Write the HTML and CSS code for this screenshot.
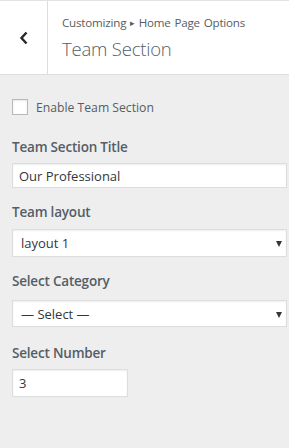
FILE: index.html
```html
<!DOCTYPE html>
<html>
<head>
  <meta charset="UTF-8">
  <title>Team Section</title>
  <link rel="stylesheet" href="styles.css">
</head>
<body>

  <div class="naglowek">
    <button class="wstecz" type="button" aria-label="Back">
      <svg width="10" height="14" viewBox="0 0 10 14">
        <polyline points="7.5,1.5 2.5,7 7.5,12.5" fill="none" stroke="#23282d" stroke-width="2.4"/>
      </svg>
    </button>
    <div class="tytul">
      <div class="okruszki">Customizing <span class="trojkat">&#9656;</span> Home Page Options</div>
      <div class="sekcja">Team Section</div>
    </div>
  </div>

  <div class="panel">
    <label class="wlacz">
      <input type="checkbox" class="pole-wyboru">
      <span>Enable Team Section</span>
    </label>

    <div class="kontrolka k-tytul">
      <label class="etykieta">Team Section Title</label>
      <input type="text" class="tekst" value="Our Professional">
    </div>

    <div class="kontrolka k-uklad">
      <label class="etykieta">Team layout</label>
      <div class="lista">
        <select>
          <option>layout 1</option>
          <option>layout 2</option>
        </select>
      </div>
    </div>

    <div class="kontrolka k-kategoria">
      <label class="etykieta">Select Category</label>
      <div class="lista">
        <select>
          <option>&mdash; Select &mdash;</option>
        </select>
      </div>
    </div>

    <div class="kontrolka k-liczba">
      <label class="etykieta">Select Number</label>
      <input type="text" class="tekst liczba" value="3">
    </div>
  </div>

</body>
</html>
```

FILE: styles.css
```css
body {
  margin: 0;
  padding: 0;
  background-color: #eeeeee;
  font-family: 'Open Sans', sans-serif;
  color: #555d66;
  width: 289px;
  height: 448px;
  overflow: hidden;
}

.naglowek {
  display: flex;
  height: 73px;
  background-color: white;
  border-top: 1px solid #e2e2e2;
  border-bottom: 1px solid #dddddd;
}

.wstecz {
  width: 48px;
  padding: 0;
  border: none;
  border-right: 1px solid #dddddd;
  background: white;
  display: flex;
  align-items: center;
  justify-content: center;
  cursor: pointer;
}

.wstecz svg {
  display: block;
  margin-top: 1px;
}

.tytul {
  padding: 13px 0 0 14px;
}

.okruszki {
  font-size: 11.6px;
  line-height: 18px;
  color: #555d66;
  letter-spacing: -0.2px;
  word-spacing: 1px;
}

.trojkat {
  font-size: 9px;
  vertical-align: 1px;
}

.sekcja {
  font-size: 18.5px;
  font-weight: 300;
  line-height: 26px;
  margin-top: 4px;
  color: #555d66;
  letter-spacing: -0.2px;
}

.panel {
  padding: 24px 2px 0 12px;
}

.wlacz {
  display: flex;
  align-items: center;
  height: 16px;
  font-size: 12.2px;
  cursor: pointer;
}

.pole-wyboru {
  appearance: none;
  width: 16px;
  height: 16px;
  margin: 0 8px 0 0;
  background-color: white;
  border: 1px solid #b4b9be;
  box-shadow: inset 0 1px 2px rgba(0,0,0,0.1);
}

.etykieta {
  display: block;
  font-size: 13.5px;
  font-weight: 600;
  line-height: 20px;
  letter-spacing: -0.2px;
}

.k-tytul {
  margin-top: 22px;
}

.k-uklad,
.k-kategoria {
  margin-top: 14px;
}

.k-liczba {
  margin-top: 16px;
}

.k-tytul .etykieta {
  margin-bottom: 6px;
}

.k-uklad .etykieta {
  margin-bottom: 7px;
}

.k-kategoria .etykieta {
  margin-bottom: 9px;
}

.k-liczba .etykieta {
  margin-bottom: 6px;
}

.tekst,
.lista select {
  display: block;
  box-sizing: border-box;
  width: 100%;
  margin: 0;
  background-color: white;
  border: 1px solid #dddddd;
  box-shadow: inset 0 1px 2px rgba(0,0,0,0.07);
  font-family: 'Open Sans', sans-serif;
  font-size: 13px;
  color: #32373c;
  outline: none;
}

.tekst {
  height: 25px;
  padding: 0 6px;
}

.liczba {
  width: 116px;
  height: 28px;
}

.lista {
  position: relative;
}

.lista select {
  appearance: none;
  height: 28px;
  padding: 0 20px 0 8px;
  border-radius: 0;
}

.k-kategoria .lista select {
  height: 27px;
}

.lista::after {
  content: "";
  position: absolute;
  right: 5px;
  top: 50%;
  margin-top: -2px;
  border-left: 3.5px solid transparent;
  border-right: 3.5px solid transparent;
  border-top: 6px solid #32373c;
  pointer-events: none;
}
```
